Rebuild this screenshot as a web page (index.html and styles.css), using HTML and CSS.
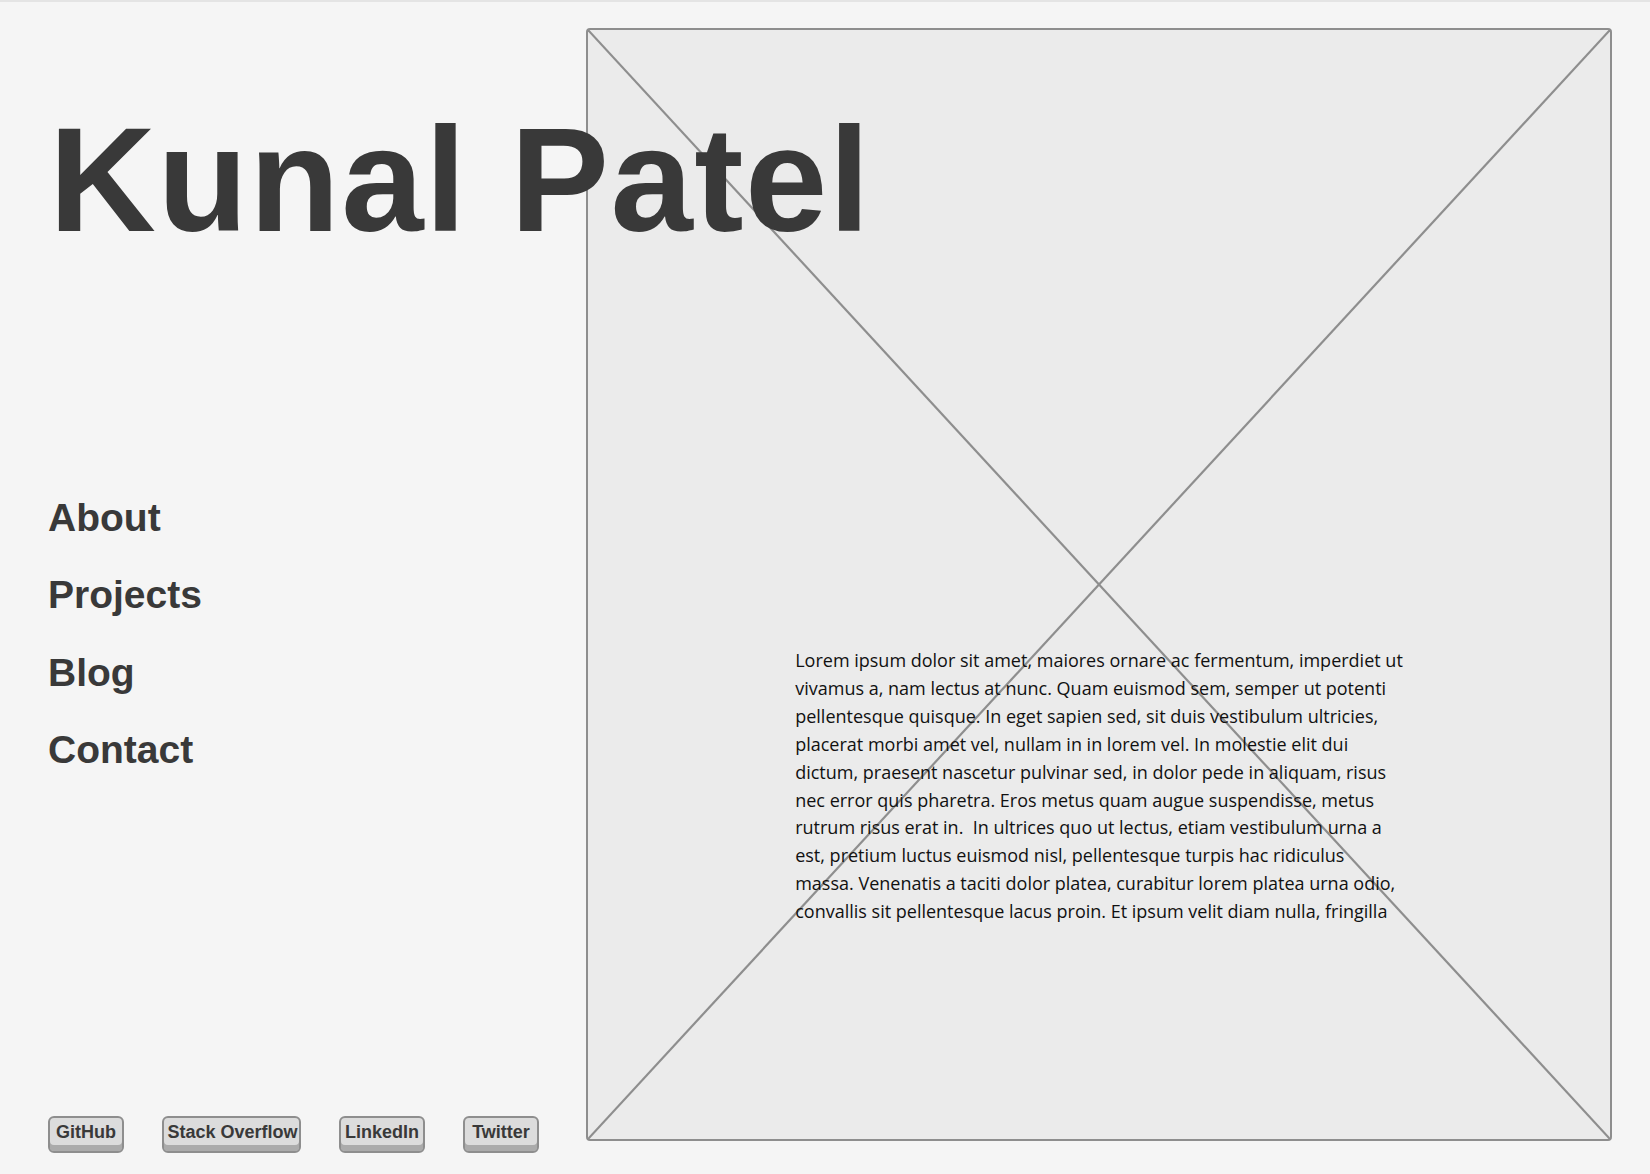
FILE: index.html
```html
<!DOCTYPE html>
<html lang="en">
<head>
<meta charset="utf-8">
<title>Kunal Patel</title>
<link rel="stylesheet" href="styles.css">
</head>
<body>
<div class="page">
  <aside class="side">
    <h1 class="title">Kunal Patel</h1>
    <nav class="nav">
      <a class="nav-link" href="#">About</a>
      <a class="nav-link" href="#">Projects</a>
      <a class="nav-link" href="#">Blog</a>
      <a class="nav-link" href="#">Contact</a>
    </nav>
    <div class="social">
      <span class="btn btn-gh">GitHub</span>
      <span class="btn btn-so">Stack Overflow</span>
      <span class="btn btn-li">LinkedIn</span>
      <span class="btn btn-tw">Twitter</span>
    </div>
  </aside>
  <main class="hero">
    <div class="placeholder">
      <svg class="cross" viewBox="0 0 100 100" preserveAspectRatio="none" aria-hidden="true">
        <line x1="0" y1="0" x2="100" y2="100" vector-effect="non-scaling-stroke"/>
        <line x1="100" y1="0" x2="0" y2="100" vector-effect="non-scaling-stroke"/>
      </svg>
      <p class="lorem">Lorem ipsum dolor sit amet, maiores ornare ac fermentum, imperdiet ut<br>vivamus a, nam lectus at nunc. Quam euismod sem, semper ut potenti<br>pellentesque quisque. In eget sapien sed, sit duis vestibulum ultricies,<br>placerat morbi amet vel, nullam in in lorem vel. In molestie elit dui<br>dictum, praesent nascetur pulvinar sed, in dolor pede in aliquam, risus<br>nec error quis pharetra. Eros metus quam augue suspendisse, metus<br>rutrum risus erat in.&nbsp; In ultrices quo ut lectus, etiam vestibulum urna a<br>est, pretium luctus euismod nisl, pellentesque turpis hac ridiculus<br>massa. Venenatis a taciti dolor platea, curabitur lorem platea urna odio,<br>convallis sit pellentesque lacus proin. Et ipsum velit diam nulla, fringilla</p>
    </div>
  </main>
</div>
</body>
</html>
```

FILE: styles.css
```css
html, body {
  margin: 0;
  padding: 0;
}
body {
  background: #f5f5f5;
  font-family: "Liberation Sans", Arial, sans-serif;
  color: #393939;
}
.page {
  display: flex;
  height: 1174px;
  box-sizing: border-box;
  border-top: 2px solid #e4e4e4;
}
.side {
  width: 586px;
  flex: none;
  display: flex;
  flex-direction: column;
  padding-left: 48px;
  box-sizing: border-box;
  position: relative;
  z-index: 2;
}
.title {
  margin: 104px 0 0 1px;
  font-size: 148px;
  line-height: 148px;
  font-weight: 700;
  white-space: nowrap;
  color: #393939;
  letter-spacing: 1.5px;
}
.nav {
  display: flex;
  flex-direction: column;
  margin-top: 225px;
}
.nav-link {
  font-size: 39px;
  font-weight: 700;
  line-height: 77.4px;
  color: #393939;
  text-decoration: none;
}
.social {
  margin-top: auto;
  margin-bottom: 21px;
  display: flex;
  gap: 38px;
}
.btn {
  box-sizing: border-box;
  height: 37px;
  border: 2px solid #8e8e8e;
  border-radius: 6px;
  background: #dcdcdc;
  box-shadow: inset 0 -6px 0 #ababab;
  font-size: 18px;
  font-weight: 700;
  line-height: 26px;
  padding-top: 1px;
  text-align: center;
  white-space: nowrap;
  overflow: hidden;
  color: #393939;
}
.btn-gh { width: 76px; }
.btn-so { width: 139px; padding-left: 2px; }
.btn-li { width: 86px; }
.btn-tw { width: 76px; }
.hero {
  flex: 1;
  padding: 26px 38px 0 0;
}
.placeholder {
  position: relative;
  box-sizing: border-box;
  width: 1026px;
  height: 1113px;
  border: 2px solid #8e8e8e;
  border-radius: 4px;
  background: #ebebeb;
  display: flex;
  justify-content: center;
  align-items: flex-start;
}
.cross {
  position: absolute;
  inset: 0;
  width: 100%;
  height: 100%;
}
.cross line {
  stroke: #8e8e8e;
  stroke-width: 2.2;
}
.lorem {
  position: relative;
  margin: 617px 0 0;
  font-family: "Open Sans", "Liberation Sans", sans-serif;
  font-size: 18px;
  font-weight: 500;
  line-height: 27.9px;
  color: #111;
  white-space: nowrap;
}
```
